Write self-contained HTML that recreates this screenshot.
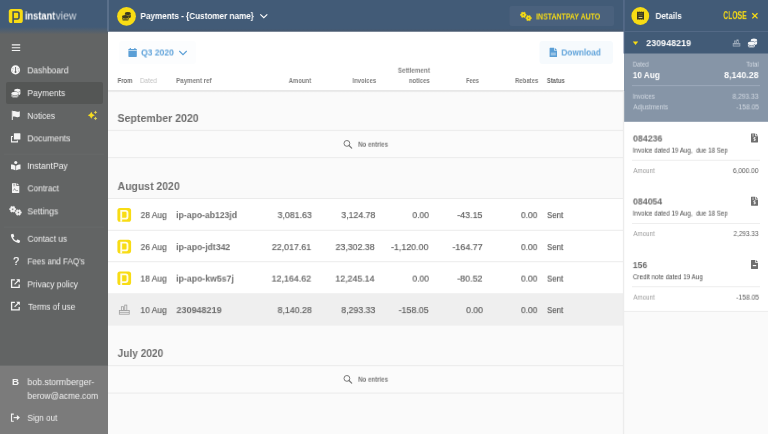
<!DOCTYPE html>
<html><head><meta charset="utf-8"><title>instantview - Payments</title>
<style>
html,body{margin:0;padding:0}
body{width:768px;height:434px;overflow:hidden;background:#fafafa;position:relative;font-family:"Liberation Sans",sans-serif;}
.t{position:absolute;white-space:pre;display:block}
svg{position:absolute;left:0;top:0}
</style></head><body>
<svg width="768" height="434" viewBox="0 0 768 434">
<defs>
<linearGradient id="hs" x1="0" y1="0" x2="0" y2="1"><stop offset="0" stop-color="#000" stop-opacity=".13"/><stop offset="1" stop-color="#000" stop-opacity="0"/></linearGradient>
<linearGradient id="sh" x1="0" y1="0" x2="0" y2="1"><stop offset="0" stop-color="#425b77"/><stop offset="1" stop-color="#626464"/></linearGradient>
<linearGradient id="hb" x1="0" y1="0" x2="0" y2="1"><stop offset="0" stop-color="#48566a" stop-opacity="0"/><stop offset="1" stop-color="#48566a" stop-opacity=".85"/></linearGradient>
</defs>
<rect x="0" y="0" width="768" height="434" fill="#fafafa"/>
<!-- main table header -->
<rect x="108" y="90.1" width="516" height="2.6" fill="url(#hs)"/>
<rect x="108" y="31" width="516" height="59.2" fill="#fff"/>
<rect x="119" y="41" width="77" height="23" rx="3" fill="#fcfdfe"/>
<rect x="539.5" y="41" width="73.5" height="23" rx="3" fill="#f6fafd"/>
<!-- no entries rows -->
<rect x="108" y="129.9" width="516" height="28.3" fill="#ededed"/>
<rect x="108" y="131.1" width="516" height="25.9" fill="#fbfbfb"/>
<rect x="108" y="365" width="516" height="28.7" fill="#ededed"/>
<rect x="108" y="366.2" width="516" height="26.3" fill="#fbfbfb"/>
<!-- data rows -->
<rect x="108" y="198" width="516" height="95.3" fill="#e9e9e9"/>
<rect x="108" y="198.9" width="516" height="30.9" fill="#fff"/>
<rect x="108" y="230.7" width="516" height="30.6" fill="#fff"/>
<rect x="108" y="262.2" width="516" height="31.1" fill="#fff"/>
<rect x="108" y="293.3" width="516" height="32.3" fill="#efefef"/>
<!-- top bar -->
<rect x="108" y="0" width="660" height="31.5" fill="#425b77"/>
<rect x="108" y="28.5" width="516" height="3" fill="url(#hb)"/>
<rect x="509.5" y="6" width="104.5" height="20" rx="2" fill="#4a617d"/>
<!-- sidebar -->
<rect x="0" y="0" width="108" height="434" fill="#626464"/>
<rect x="0" y="0" width="108" height="27.3" fill="#425b77"/>
<rect x="0" y="27" width="108" height="7.5" fill="url(#sh)"/>
<rect x="0" y="365.6" width="108" height="68.4" fill="#7b7b7b"/>
<rect x="6" y="82" width="97" height="22" rx="2" fill="#545655"/>
<rect x="4" y="153.7" width="100" height="0.9" fill="#686a6a"/>
<rect x="4" y="226.6" width="100" height="0.9" fill="#686a6a"/>
<rect x="107.4" y="0" width="1.2" height="31.3" fill="#6b7f99"/>
<!-- right panel -->
<rect x="624" y="121" width="144" height="190.8" fill="#ececec"/>
<rect x="624" y="121" width="144" height="189.9" fill="#fff"/>
<rect x="624" y="31" width="144" height="23" fill="#425b77"/>
<rect x="624" y="53.5" width="144" height="68.3" fill="#8695a7"/>
<rect x="623.4" y="0" width="1.1" height="53.5" fill="#66799a" opacity=".8"/>
<rect x="624.2" y="31" width="143.8" height="0.9" fill="#566b88"/>
<rect x="632" y="85.2" width="128" height="0.9" fill="#9eabbc"/>
<rect x="622.9" y="91" width="1.3" height="343" fill="#ececec"/>
<rect x="632" y="159.8" width="128" height="0.9" fill="#ececec"/>
<rect x="632" y="223" width="128" height="0.9" fill="#ececec"/>
<rect x="632" y="286.3" width="128" height="0.9" fill="#ececec"/>
</svg>
<div id="tx" style="position:absolute;left:0;top:0;width:768px;height:434px;will-change:transform">
<span class="t" style="top:63px;font-size:9.4px;line-height:13px;color:#f2f2f2;left:27px;transform-origin:0 50%;transform:matrix3d(0.8958,0,0,0,0,1,0,0,0,0,1,0,0.360,0.365,0,1);">Dashboard</span>
<span class="t" style="top:86px;font-size:9.4px;line-height:13px;color:#f2f2f2;left:27px;transform-origin:0 50%;transform:matrix3d(0.9060,0,0,0,0,1,0,0,0,0,1,0,0.360,0.065,0,1);">Payments</span>
<span class="t" style="top:108px;font-size:9.4px;line-height:13px;color:#f2f2f2;left:27px;transform-origin:0 50%;transform:matrix3d(0.8842,0,0,0,0,1,0,0,0,0,1,0,0.370,0.865,0,1);">Notices</span>
<span class="t" style="top:131px;font-size:9.4px;line-height:13px;color:#f2f2f2;left:27px;transform-origin:0 50%;transform:matrix3d(0.9047,0,0,0,0,1,0,0,0,0,1,0,0.360,0.365,0,1);">Documents</span>
<span class="t" style="top:158px;font-size:9.4px;line-height:13px;color:#f2f2f2;left:27px;transform-origin:0 50%;transform:matrix3d(0.9112,0,0,0,0,1,0,0,0,0,1,0,0.300,0.865,0,1);">InstantPay</span>
<span class="t" style="top:181px;font-size:9.4px;line-height:13px;color:#f2f2f2;left:27px;transform-origin:0 50%;transform:matrix3d(0.8849,0,0,0,0,1,0,0,0,0,1,0,0.530,0.365,0,1);">Contract</span>
<span class="t" style="top:204px;font-size:9.4px;line-height:13px;color:#f2f2f2;left:27px;transform-origin:0 50%;transform:matrix3d(0.9081,0,0,0,0,1,0,0,0,0,1,0,0.380,0.365,0,1);">Settings</span>
<span class="t" style="top:231px;font-size:9.4px;line-height:13px;color:#f2f2f2;left:27px;transform-origin:0 50%;transform:matrix3d(0.8801,0,0,0,0,1,0,0,0,0,1,0,0.540,0.765,0,1);">Contact us</span>
<span class="t" style="top:254px;font-size:9.4px;line-height:13px;color:#f2f2f2;left:27px;transform-origin:0 50%;transform:matrix3d(0.8542,0,0,0,0,1,0,0,0,0,1,0,0.400,0.365,0,1);">Fees and FAQ’s</span>
<span class="t" style="top:277px;font-size:9.4px;line-height:13px;color:#f2f2f2;left:27px;transform-origin:0 50%;transform:matrix3d(0.8828,0,0,0,0,1,0,0,0,0,1,0,0.370,0.265,0,1);">Privacy policy</span>
<span class="t" style="top:299px;font-size:9.4px;line-height:13px;color:#f2f2f2;left:28px;transform-origin:0 50%;transform:matrix3d(0.8781,0,0,0,0,1,0,0,0,0,1,0,0.080,0.765,0,1);">Terms of use</span>
<span class="t" style="top:375px;font-size:9.4px;line-height:13px;color:#f2f2f2;left:27px;transform-origin:0 50%;transform:matrix3d(0.9291,0,0,0,0,1,0,0,0,0,1,0,0.440,0.065,0,1);">bob.stormberger-</span>
<span class="t" style="top:388px;font-size:9.4px;line-height:13px;color:#f2f2f2;left:27px;transform-origin:0 50%;transform:matrix3d(0.9020,0,0,0,0,1,0,0,0,0,1,0,0.460,0.865,0,1);">berow@acme.com</span>
<span class="t" style="top:410px;font-size:9.4px;line-height:13px;color:#f2f2f2;left:27px;transform-origin:0 50%;transform:matrix3d(0.8737,0,0,0,0,1,0,0,0,0,1,0,0.400,0.865,0,1);">Sign out</span>
<span class="t" style="top:8px;font-size:11px;line-height:15px;color:#ffffff;font-weight:bold;left:24px;transform-origin:0 50%;transform:matrix3d(0.8394,0,0,0,0,1,0,0,0,0,1,0,0.910,0.438,0,1);">instant</span>
<span class="t" style="top:8px;font-size:11px;line-height:15px;color:#d5dbe3;left:55px;transform-origin:0 50%;transform:matrix3d(0.9439,0,0,0,0,1,0,0,0,0,1,0,0.590,0.438,0,1);">view</span>
<span class="t" style="top:253px;font-size:10.5px;line-height:15px;color:#f2f2f2;-webkit-text-stroke:0.2px #f2f2f2;left:13px;transform-origin:0 50%;transform:matrix3d(1.0000,0,0,0,0,1,0,0,0,0,1,0,0.200,0.759,0,1);">?</span>
<span class="t" style="top:375px;font-size:9.8px;line-height:14px;color:#f2f2f2;font-weight:bold;left:12px;transform-origin:0 50%;transform:matrix3d(1.0000,0,0,0,0,1,0,0,0,0,1,0,0.090,0.208,0,1);">B</span>
<span class="t" style="top:8px;font-size:9.6px;line-height:13px;color:#ffffff;font-weight:bold;left:140px;transform-origin:0 50%;transform:matrix3d(0.8473,0,0,0,0,1,0,0,0,0,1,0,0.490,0.987,0,1);">Payments - {Customer name}</span>
<span class="t" style="top:10px;font-size:9.2px;line-height:13px;color:#f8dc14;font-weight:bold;left:536px;transform-origin:0 50%;transform:matrix3d(0.7604,0,0,0,0,1,0,0,0,0,1,0,0.070,0.494,0,1);">INSTANTPAY AUTO</span>
<span class="t" style="top:8px;font-size:9.6px;line-height:13px;color:#ffffff;font-weight:bold;left:655px;transform-origin:0 50%;transform:matrix3d(0.8302,0,0,0,0,1,0,0,0,0,1,0,0.600,0.937,0,1);">Details</span>
<span class="t" style="top:9px;font-size:10px;line-height:14px;color:#f8dc14;font-weight:bold;left:723px;transform-origin:0 50%;transform:matrix3d(0.6824,0,0,0,0,1,0,0,0,0,1,0,0.220,0.080,0,1);">CLOSE</span>
<span class="t" style="top:45px;font-size:9.4px;line-height:13px;color:#60a3da;font-weight:bold;left:141px;transform-origin:0 50%;transform:matrix3d(0.9111,0,0,0,0,1,0,0,0,0,1,0,0.110,0.465,0,1);">Q3 2020</span>
<span class="t" style="top:45px;font-size:9.4px;line-height:13px;color:#60a3da;font-weight:bold;left:561px;transform-origin:0 50%;transform:matrix3d(0.8837,0,0,0,0,1,0,0,0,0,1,0,0.370,0.465,0,1);">Download</span>
<span class="t" style="top:75px;font-size:7.1px;line-height:10px;color:#6a6a6a;font-weight:bold;left:117px;transform-origin:0 50%;transform:matrix3d(0.8262,0,0,0,0,1,0,0,0,0,1,0,0.640,0.992,0,1);">From</span>
<span class="t" style="top:75px;font-size:7.1px;line-height:10px;color:#c2c2c2;left:139px;transform-origin:0 50%;transform:matrix3d(0.8969,0,0,0,0,1,0,0,0,0,1,0,0.980,0.992,0,1);">Dated</span>
<span class="t" style="top:75px;font-size:7.1px;line-height:10px;color:#808080;font-weight:bold;left:176px;transform-origin:0 50%;transform:matrix3d(0.8743,0,0,0,0,1,0,0,0,0,1,0,0.110,0.992,0,1);">Payment ref</span>
<span class="t" style="top:75px;font-size:7.1px;line-height:10px;color:#808080;font-weight:bold;right:456px;transform-origin:100% 50%;transform:matrix3d(0.8352,0,0,0,0,1,0,0,0,0,1,0,-0.670,0.992,0,1);">Amount</span>
<span class="t" style="top:75px;font-size:7.1px;line-height:10px;color:#808080;font-weight:bold;right:392px;transform-origin:100% 50%;transform:matrix3d(0.8303,0,0,0,0,1,0,0,0,0,1,0,-0.300,0.992,0,1);">Invoices</span>
<span class="t" style="top:65px;font-size:7.1px;line-height:10px;color:#808080;font-weight:bold;right:338px;transform-origin:100% 50%;transform:matrix3d(0.8812,0,0,0,0,1,0,0,0,0,1,0,-0.460,0.742,0,1);">Settlement</span>
<span class="t" style="top:75px;font-size:7.1px;line-height:10px;color:#808080;font-weight:bold;right:338px;transform-origin:100% 50%;transform:matrix3d(0.8316,0,0,0,0,1,0,0,0,0,1,0,-0.230,0.992,0,1);">notices</span>
<span class="t" style="top:75px;font-size:7.1px;line-height:10px;color:#808080;font-weight:bold;right:289px;transform-origin:100% 50%;transform:matrix3d(0.7864,0,0,0,0,1,0,0,0,0,1,0,-0.370,0.992,0,1);">Fees</span>
<span class="t" style="top:75px;font-size:7.1px;line-height:10px;color:#808080;font-weight:bold;left:515px;transform-origin:0 50%;transform:matrix3d(0.8369,0,0,0,0,1,0,0,0,0,1,0,0.130,0.992,0,1);">Rebates</span>
<span class="t" style="top:75px;font-size:7.1px;line-height:10px;color:#6a6a6a;font-weight:bold;left:546px;transform-origin:0 50%;transform:matrix3d(0.8273,0,0,0,0,1,0,0,0,0,1,0,0.860,0.992,0,1);">Status</span>
<span class="t" style="top:109px;font-size:11.3px;line-height:16px;color:#707070;font-weight:bold;left:117px;transform-origin:0 50%;transform:matrix3d(0.9374,0,0,0,0,1,0,0,0,0,1,0,0.520,0.995,0,1);">September 2020</span>
<span class="t" style="top:177px;font-size:11.3px;line-height:16px;color:#707070;font-weight:bold;left:117px;transform-origin:0 50%;transform:matrix3d(0.9239,0,0,0,0,1,0,0,0,0,1,0,0.590,0.995,0,1);">August 2020</span>
<span class="t" style="top:344px;font-size:11.3px;line-height:16px;color:#707070;font-weight:bold;left:117px;transform-origin:0 50%;transform:matrix3d(0.8968,0,0,0,0,1,0,0,0,0,1,0,0.630,0.995,0,1);">July 2020</span>
<span class="t" style="top:139px;font-size:7.1px;line-height:10px;color:#777;font-weight:bold;left:358px;transform-origin:0 50%;transform:matrix3d(0.8632,0,0,0,0,1,0,0,0,0,1,0,0.120,0.742,0,1);">No entries</span>
<span class="t" style="top:374px;font-size:7.1px;line-height:10px;color:#777;font-weight:bold;left:358px;transform-origin:0 50%;transform:matrix3d(0.8632,0,0,0,0,1,0,0,0,0,1,0,0.120,0.742,0,1);">No entries</span>
<span class="t" style="top:208px;font-size:9.4px;line-height:13px;color:#5e5e5e;-webkit-text-stroke:0.18px #5e5e5e;left:140px;transform-origin:0 50%;transform:matrix3d(0.8931,0,0,0,0,1,0,0,0,0,1,0,0.620,0.065,0,1);">28 Aug</span>
<span class="t" style="top:208px;font-size:9.4px;line-height:13px;color:#6e6e6e;font-weight:bold;left:176px;transform-origin:0 50%;transform:matrix3d(0.9193,0,0,0,0,1,0,0,0,0,1,0,0.190,0.065,0,1);">ip-apo-ab123jd</span>
<span class="t" style="top:208px;font-size:9.4px;line-height:13px;color:#5e5e5e;-webkit-text-stroke:0.18px #5e5e5e;right:456px;transform-origin:100% 50%;transform:matrix3d(0.9379,0,0,0,0,1,0,0,0,0,1,0,-0.670,0.065,0,1);">3,081.63</span>
<span class="t" style="top:208px;font-size:9.4px;line-height:13px;color:#5e5e5e;-webkit-text-stroke:0.18px #5e5e5e;right:393px;transform-origin:100% 50%;transform:matrix3d(0.9307,0,0,0,0,1,0,0,0,0,1,0,-0.180,0.065,0,1);">3,124.78</span>
<span class="t" style="top:208px;font-size:9.4px;line-height:13px;color:#5e5e5e;-webkit-text-stroke:0.18px #5e5e5e;right:339px;transform-origin:100% 50%;transform:matrix3d(0.9037,0,0,0,0,1,0,0,0,0,1,0,-0.330,0.065,0,1);">0.00</span>
<span class="t" style="top:208px;font-size:9.4px;line-height:13px;color:#5e5e5e;-webkit-text-stroke:0.18px #5e5e5e;right:285px;transform-origin:100% 50%;transform:matrix3d(0.9485,0,0,0,0,1,0,0,0,0,1,0,-0.110,0.065,0,1);">-43.15</span>
<span class="t" style="top:208px;font-size:9.4px;line-height:13px;color:#5e5e5e;-webkit-text-stroke:0.18px #5e5e5e;right:230px;transform-origin:100% 50%;transform:matrix3d(0.9037,0,0,0,0,1,0,0,0,0,1,0,-0.830,0.065,0,1);">0.00</span>
<span class="t" style="top:208px;font-size:9.4px;line-height:13px;color:#5e5e5e;-webkit-text-stroke:0.18px #5e5e5e;left:546px;transform-origin:0 50%;transform:matrix3d(0.8407,0,0,0,0,1,0,0,0,0,1,0,0.990,0.065,0,1);">Sent</span>
<span class="t" style="top:240px;font-size:9.4px;line-height:13px;color:#5e5e5e;-webkit-text-stroke:0.18px #5e5e5e;left:140px;transform-origin:0 50%;transform:matrix3d(0.8931,0,0,0,0,1,0,0,0,0,1,0,0.620,0.065,0,1);">26 Aug</span>
<span class="t" style="top:240px;font-size:9.4px;line-height:13px;color:#6e6e6e;font-weight:bold;left:176px;transform-origin:0 50%;transform:matrix3d(0.9271,0,0,0,0,1,0,0,0,0,1,0,0.190,0.065,0,1);">ip-apo-jdt342</span>
<span class="t" style="top:240px;font-size:9.4px;line-height:13px;color:#5e5e5e;-webkit-text-stroke:0.18px #5e5e5e;right:456px;transform-origin:100% 50%;transform:matrix3d(0.9412,0,0,0,0,1,0,0,0,0,1,0,-0.640,0.065,0,1);">22,017.61</span>
<span class="t" style="top:240px;font-size:9.4px;line-height:13px;color:#5e5e5e;-webkit-text-stroke:0.18px #5e5e5e;right:393px;transform-origin:100% 50%;transform:matrix3d(0.9348,0,0,0,0,1,0,0,0,0,1,0,-0.150,0.065,0,1);">23,302.38</span>
<span class="t" style="top:240px;font-size:9.4px;line-height:13px;color:#5e5e5e;-webkit-text-stroke:0.18px #5e5e5e;right:339px;transform-origin:100% 50%;transform:matrix3d(0.9409,0,0,0,0,1,0,0,0,0,1,0,-0.300,0.065,0,1);">-1,120.00</span>
<span class="t" style="top:240px;font-size:9.4px;line-height:13px;color:#5e5e5e;-webkit-text-stroke:0.18px #5e5e5e;right:285px;transform-origin:100% 50%;transform:matrix3d(0.9508,0,0,0,0,1,0,0,0,0,1,0,-0.110,0.065,0,1);">-164.77</span>
<span class="t" style="top:240px;font-size:9.4px;line-height:13px;color:#5e5e5e;-webkit-text-stroke:0.18px #5e5e5e;right:230px;transform-origin:100% 50%;transform:matrix3d(0.9037,0,0,0,0,1,0,0,0,0,1,0,-0.830,0.065,0,1);">0.00</span>
<span class="t" style="top:240px;font-size:9.4px;line-height:13px;color:#5e5e5e;-webkit-text-stroke:0.18px #5e5e5e;left:546px;transform-origin:0 50%;transform:matrix3d(0.8407,0,0,0,0,1,0,0,0,0,1,0,0.990,0.065,0,1);">Sent</span>
<span class="t" style="top:271px;font-size:9.4px;line-height:13px;color:#5e5e5e;-webkit-text-stroke:0.18px #5e5e5e;left:140px;transform-origin:0 50%;transform:matrix3d(0.8998,0,0,0,0,1,0,0,0,0,1,0,0.430,0.565,0,1);">18 Aug</span>
<span class="t" style="top:271px;font-size:9.4px;line-height:13px;color:#6e6e6e;font-weight:bold;left:176px;transform-origin:0 50%;transform:matrix3d(0.9282,0,0,0,0,1,0,0,0,0,1,0,0.180,0.565,0,1);">ip-apo-kw5s7j</span>
<span class="t" style="top:271px;font-size:9.4px;line-height:13px;color:#5e5e5e;-webkit-text-stroke:0.18px #5e5e5e;right:456px;transform-origin:100% 50%;transform:matrix3d(0.9461,0,0,0,0,1,0,0,0,0,1,0,-0.640,0.565,0,1);">12,164.62</span>
<span class="t" style="top:271px;font-size:9.4px;line-height:13px;color:#5e5e5e;-webkit-text-stroke:0.18px #5e5e5e;right:393px;transform-origin:100% 50%;transform:matrix3d(0.9369,0,0,0,0,1,0,0,0,0,1,0,-0.270,0.565,0,1);">12,245.14</span>
<span class="t" style="top:271px;font-size:9.4px;line-height:13px;color:#5e5e5e;-webkit-text-stroke:0.18px #5e5e5e;right:339px;transform-origin:100% 50%;transform:matrix3d(0.9037,0,0,0,0,1,0,0,0,0,1,0,-0.330,0.565,0,1);">0.00</span>
<span class="t" style="top:271px;font-size:9.4px;line-height:13px;color:#5e5e5e;-webkit-text-stroke:0.18px #5e5e5e;right:285px;transform-origin:100% 50%;transform:matrix3d(0.9496,0,0,0,0,1,0,0,0,0,1,0,-0.080,0.565,0,1);">-80.52</span>
<span class="t" style="top:271px;font-size:9.4px;line-height:13px;color:#5e5e5e;-webkit-text-stroke:0.18px #5e5e5e;right:230px;transform-origin:100% 50%;transform:matrix3d(0.9037,0,0,0,0,1,0,0,0,0,1,0,-0.830,0.565,0,1);">0.00</span>
<span class="t" style="top:271px;font-size:9.4px;line-height:13px;color:#5e5e5e;-webkit-text-stroke:0.18px #5e5e5e;left:546px;transform-origin:0 50%;transform:matrix3d(0.8407,0,0,0,0,1,0,0,0,0,1,0,0.990,0.565,0,1);">Sent</span>
<span class="t" style="top:303px;font-size:9.4px;line-height:13px;color:#5e5e5e;-webkit-text-stroke:0.18px #5e5e5e;left:140px;transform-origin:0 50%;transform:matrix3d(0.8998,0,0,0,0,1,0,0,0,0,1,0,0.430,0.065,0,1);">10 Aug</span>
<span class="t" style="top:303px;font-size:9.4px;line-height:13px;color:#6e6e6e;font-weight:bold;left:176px;transform-origin:0 50%;transform:matrix3d(0.9626,0,0,0,0,1,0,0,0,0,1,0,0.430,0.065,0,1);">230948219</span>
<span class="t" style="top:303px;font-size:9.4px;line-height:13px;color:#5e5e5e;-webkit-text-stroke:0.18px #5e5e5e;right:456px;transform-origin:100% 50%;transform:matrix3d(0.9377,0,0,0,0,1,0,0,0,0,1,0,-0.680,0.065,0,1);">8,140.28</span>
<span class="t" style="top:303px;font-size:9.4px;line-height:13px;color:#5e5e5e;-webkit-text-stroke:0.18px #5e5e5e;right:393px;transform-origin:100% 50%;transform:matrix3d(0.9309,0,0,0,0,1,0,0,0,0,1,0,-0.170,0.065,0,1);">8,293.33</span>
<span class="t" style="top:303px;font-size:9.4px;line-height:13px;color:#5e5e5e;-webkit-text-stroke:0.18px #5e5e5e;right:339px;transform-origin:100% 50%;transform:matrix3d(0.9448,0,0,0,0,1,0,0,0,0,1,0,-0.090,0.065,0,1);">-158.05</span>
<span class="t" style="top:303px;font-size:9.4px;line-height:13px;color:#5e5e5e;-webkit-text-stroke:0.18px #5e5e5e;right:285px;transform-origin:100% 50%;transform:matrix3d(0.9206,0,0,0,0,1,0,0,0,0,1,0,-0.330,0.065,0,1);">0.00</span>
<span class="t" style="top:303px;font-size:9.4px;line-height:13px;color:#5e5e5e;-webkit-text-stroke:0.18px #5e5e5e;right:230px;transform-origin:100% 50%;transform:matrix3d(0.9037,0,0,0,0,1,0,0,0,0,1,0,-0.830,0.065,0,1);">0.00</span>
<span class="t" style="top:303px;font-size:9.4px;line-height:13px;color:#5e5e5e;-webkit-text-stroke:0.18px #5e5e5e;left:546px;transform-origin:0 50%;transform:matrix3d(0.8407,0,0,0,0,1,0,0,0,0,1,0,0.990,0.065,0,1);">Sent</span>
<span class="t" style="top:36px;font-size:9.5px;line-height:13px;color:#ffffff;font-weight:bold;left:646px;transform-origin:0 50%;transform:matrix3d(0.9430,0,0,0,0,1,0,0,0,0,1,0,0.190,0.101,0,1);">230948219</span>
<span class="t" style="top:59px;font-size:7.1px;line-height:10px;color:#d3dae3;left:632px;transform-origin:0 50%;transform:matrix3d(0.8352,0,0,0,0,1,0,0,0,0,1,0,0.820,0.642,0,1);">Dated</span>
<span class="t" style="top:59px;font-size:7.1px;line-height:10px;color:#d3dae3;right:9px;transform-origin:100% 50%;transform:matrix3d(0.8170,0,0,0,0,1,0,0,0,0,1,0,-0.490,0.642,0,1);">Total</span>
<span class="t" style="top:68px;font-size:9.5px;line-height:13px;color:#ffffff;font-weight:bold;left:632px;transform-origin:0 50%;transform:matrix3d(0.8618,0,0,0,0,1,0,0,0,0,1,0,0.810,0.101,0,1);">10 Aug</span>
<span class="t" style="top:68px;font-size:9.5px;line-height:13px;color:#ffffff;font-weight:bold;right:9px;transform-origin:100% 50%;transform:matrix3d(0.9296,0,0,0,0,1,0,0,0,0,1,0,-0.490,0.101,0,1);">8,140.28</span>
<span class="t" style="top:91px;font-size:7.1px;line-height:10px;color:#d3dae3;left:632px;transform-origin:0 50%;transform:matrix3d(0.8447,0,0,0,0,1,0,0,0,0,1,0,0.760,0.742,0,1);">Invoices</span>
<span class="t" style="top:91px;font-size:7.1px;line-height:10px;color:#d3dae3;right:9px;transform-origin:100% 50%;transform:matrix3d(0.9387,0,0,0,0,1,0,0,0,0,1,0,-0.220,0.742,0,1);">8,293.33</span>
<span class="t" style="top:102px;font-size:7.1px;line-height:10px;color:#d3dae3;left:633px;transform-origin:0 50%;transform:matrix3d(0.8882,0,0,0,0,1,0,0,0,0,1,0,0.380,0.342,0,1);">Adjustments</span>
<span class="t" style="top:102px;font-size:7.1px;line-height:10px;color:#d3dae3;right:8px;transform-origin:100% 50%;transform:matrix3d(0.9525,0,0,0,0,1,0,0,0,0,1,0,-0.950,0.342,0,1);">-158.05</span>
<span class="t" style="top:131px;font-size:9.4px;line-height:13px;color:#6c6c6c;font-weight:bold;left:632px;transform-origin:0 50%;transform:matrix3d(0.9437,0,0,0,0,1,0,0,0,0,1,0,0.920,0.465,0,1);">084236</span>
<span class="t" style="top:145px;font-size:7.1px;line-height:10px;color:#4a4a4a;left:632px;transform-origin:0 50%;transform:matrix3d(0.8762,0,0,0,0,1,0,0,0,0,1,0,0.740,0.642,0,1);">Invoice dated 19 Aug,  due 18 Sep</span>
<span class="t" style="top:166px;font-size:7.1px;line-height:10px;color:#9a9a9a;left:633px;transform-origin:0 50%;transform:matrix3d(0.8714,0,0,0,0,1,0,0,0,0,1,0,0.380,0.042,0,1);">Amount</span>
<span class="t" style="top:166px;font-size:7.1px;line-height:10px;color:#5a5a5a;right:9px;transform-origin:100% 50%;transform:matrix3d(0.9221,0,0,0,0,1,0,0,0,0,1,0,-0.250,0.042,0,1);">6,000.00</span>
<span class="t" style="top:194px;font-size:9.4px;line-height:13px;color:#6c6c6c;font-weight:bold;left:632px;transform-origin:0 50%;transform:matrix3d(0.9371,0,0,0,0,1,0,0,0,0,1,0,0.930,0.465,0,1);">084054</span>
<span class="t" style="top:208px;font-size:7.1px;line-height:10px;color:#4a4a4a;left:632px;transform-origin:0 50%;transform:matrix3d(0.8762,0,0,0,0,1,0,0,0,0,1,0,0.740,0.642,0,1);">Invoice dated 19 Aug,  due 18 Sep</span>
<span class="t" style="top:229px;font-size:7.1px;line-height:10px;color:#9a9a9a;left:633px;transform-origin:0 50%;transform:matrix3d(0.8714,0,0,0,0,1,0,0,0,0,1,0,0.380,0.042,0,1);">Amount</span>
<span class="t" style="top:229px;font-size:7.1px;line-height:10px;color:#5a5a5a;right:9px;transform-origin:100% 50%;transform:matrix3d(0.8993,0,0,0,0,1,0,0,0,0,1,0,-0.230,0.042,0,1);">2,293.33</span>
<span class="t" style="top:258px;font-size:9.4px;line-height:13px;color:#6c6c6c;font-weight:bold;left:632px;transform-origin:0 50%;transform:matrix3d(0.9131,0,0,0,0,1,0,0,0,0,1,0,0.780,0.065,0,1);">156</span>
<span class="t" style="top:272px;font-size:7.1px;line-height:10px;color:#4a4a4a;left:632px;transform-origin:0 50%;transform:matrix3d(0.8916,0,0,0,0,1,0,0,0,0,1,0,0.870,0.242,0,1);">Credit note dated 19 Aug</span>
<span class="t" style="top:292px;font-size:7.1px;line-height:10px;color:#9a9a9a;left:633px;transform-origin:0 50%;transform:matrix3d(0.8714,0,0,0,0,1,0,0,0,0,1,0,0.380,0.642,0,1);">Amount</span>
<span class="t" style="top:292px;font-size:7.1px;line-height:10px;color:#5a5a5a;right:8px;transform-origin:100% 50%;transform:matrix3d(0.9525,0,0,0,0,1,0,0,0,0,1,0,-0.950,0.642,0,1);">-158.05</span>
</div>
<svg width="768" height="434" viewBox="0 0 768 434">
<g transform="translate(8.8 9) scale(1.0)"><rect x="0" y="0" width="14" height="14" rx="2.6" fill="#f8dc14"/><path d="M4.3 14 V2.95 H8.7 a1.5 1.5 0 0 1 1.5 1.5 V8.5 a1.5 1.5 0 0 1 -1.5 1.5 H4.6" fill="none" stroke="#3d4f63" stroke-width="1.55"/></g>
<path d="M11.8 44.9 H20.2 M11.8 47.7 H20.2 M11.8 50.5 H20.2" stroke="#f4f4f4" stroke-width="1.1"/>
<circle cx="15.55" cy="69.9" r="4.55" fill="#f4f4f4"/>
<path d="M15.55 67 V72" stroke="#626464" stroke-width="0.9"/><circle cx="15.55" cy="72" r="0.95" fill="#626464"/><path d="M12.9 68.2 L13.2 69.3 M18.2 68.2 L17.9 69.3 M12.4 70.6 V71.5 M18.7 70.6 V71.5" stroke="#8a8c8c" stroke-width="0.7"/>
<g transform="translate(11.4 88.5) scale(1.011111111111111)"><path d="M2.9 1.7 a3 1.5 0 0 1 6 0 v3.4 a3 1.5 0 0 1 -2 1.4 v-2 a3.4 1.6 0 0 0 -4 -1.7z" fill="#f4f4f4"/><path d="M0.1 4.7 a3.4 1.55 0 0 1 6.8 0 v2.7 a3.4 1.55 0 0 1 -6.8 0z" fill="#f4f4f4"/><path d="M0.1 5.55 a3.4 1.55 0 0 0 6.8 0 M0.1 7.0 a3.4 1.55 0 0 0 6.8 0" fill="none" stroke="#545655" stroke-width="0.55"/><path d="M7.1 3.4 a3 1.5 0 0 0 1.8 -0.9" fill="none" stroke="#545655" stroke-width="0.5"/></g>
<path d="M11.8 110.8 h1 v9.1 h-1z" fill="#f4f4f4"/><path d="M12.8 111.3 c1.6 -0.7 2.6 0 3.6 0.3 s2 0.3 3.4 -0.4 v5.4 c-1.4 0.7 -2.4 0.7 -3.4 0.4 s-2 -1 -3.6 -0.3z" fill="#f4f4f4"/>
<path d="M91.3 111.8 Q92.07 114.53 94.8 115.3 Q92.07 116.07 91.3 118.8 Q90.53 116.07 87.8 115.3 Q90.53 114.53 91.3 111.8Z" fill="#f5dc1e" opacity="1"/>
<path d="M95.5 110.5 Q95.896 111.904 97.3 112.3 Q95.896 112.696 95.5 114.1 Q95.104 112.696 93.7 112.3 Q95.104 111.904 95.5 110.5Z" fill="#f0dc4a" opacity="0.95"/>
<path d="M95.5 116.60000000000001 Q95.896 118.004 97.3 118.4 Q95.896 118.796 95.5 120.2 Q95.104 118.796 93.7 118.4 Q95.104 118.004 95.5 116.60000000000001Z" fill="#e3d85a" opacity="0.95"/>
<path d="M13 136.5 H11.5 V141.9 H17.4 V140.5" fill="none" stroke="#f4f4f4" stroke-width="1.1"/><rect x="13.9" y="133.2" width="6.5" height="6.4" rx="0.5" fill="#f4f4f4"/>
<circle cx="15.75" cy="162.5" r="1.55" fill="#f4f4f4"/><path d="M11 164.6 c1.6 0 3.2 0.4 4.4 1.1 v4.6 c-1.2 -0.7 -2.8 -1.1 -4.4 -1.1z M20.5 164.6 c-1.6 0 -3.2 0.4 -4.4 1.1 v4.6 c1.2 -0.7 2.8 -1.1 4.4 -1.1z" fill="#f4f4f4"/>
<path d="M12.4 183.2 H16.4 V186 H19.3 V192.5 a0.4 0.4 0 0 1 -0.4 0.4 H12.4 a0.4 0.4 0 0 1 -0.4 -0.4 V183.6 a0.4 0.4 0 0 1 0.4 -0.4z M17.1 183.2 L19.3 185.3 H17.1z" fill="#f4f4f4"/><path d="M13.2 184.6 H15.2 M13.2 185.8 H15.2" stroke="#626464" stroke-width="0.5"/><path d="M13.3 190.6 L14.6 188.6 L15.4 190.2 L16.2 190.6 H18" fill="none" stroke="#626464" stroke-width="0.6"/>
<path d="M15.72 208.49 L15.72 209.91 L15.06 209.97 L14.54 210.86 L14.82 211.46 L13.60 212.17 L13.22 211.63 L12.18 211.63 L11.80 212.17 L10.58 211.46 L10.86 210.86 L10.34 209.97 L9.68 209.91 L9.68 208.49 L10.34 208.43 L10.86 207.54 L10.58 206.94 L11.80 206.23 L12.18 206.77 L13.22 206.77 L13.60 206.23 L14.82 206.94 L14.54 207.54 L15.06 208.43Z M13.63 209.20 A0.93 0.93 0 1 0 11.77 209.20 A0.93 0.93 0 1 0 13.63 209.20Z" fill="#f4f4f4" fill-rule="evenodd" stroke="#f4f4f4" stroke-width="0.5" stroke-linejoin="round"/>
<path d="M21.32 211.81 L21.32 213.19 L20.68 213.24 L20.18 214.11 L20.45 214.69 L19.27 215.37 L18.90 214.85 L17.90 214.85 L17.53 215.37 L16.35 214.69 L16.62 214.11 L16.12 213.24 L15.48 213.19 L15.48 211.81 L16.12 211.76 L16.62 210.89 L16.35 210.31 L17.53 209.63 L17.90 210.15 L18.90 210.15 L19.27 209.63 L20.45 210.31 L20.18 210.89 L20.68 211.76Z M19.30 212.50 A0.90 0.90 0 1 0 17.50 212.50 A0.90 0.90 0 1 0 19.30 212.50Z" fill="#f4f4f4" fill-rule="evenodd" stroke="#f4f4f4" stroke-width="0.5" stroke-linejoin="round"/>
<path d="M12.6 233.9 l-1.3 0.4 c-0.4 0.2 -0.5 0.5 -0.4 1 c0.6 4 3.7 7.100 7.700 7.700 c0.5 0.1 0.8 -0.1 1 -0.4 l0.500 -1.4 c0.1 -0.3 0 -0.6 -0.3 -0.8 l-1.9 -0.8 c-0.3 -0.1 -0.6 0 -0.8 0.2 l-0.8 1 c-1.5 -0.7 -2.6 -1.8 -3.300 -3.300 l1 -0.8 c0.2 -0.2 0.3 -0.5 0.2 -0.8 l-0.8 -1.800 c-0.2 -0.300 -0.500 -0.400 -0.800 -0.200z" fill="#f4f4f4"/>
<g transform="translate(11 279.2)" fill="none" stroke="#f4f4f4" stroke-width="1.3"><path d="M3.9 0.6 H0.6 V8.2 H8.2 V5.2"/><path d="M3.6 5.2 L8.3 0.5" stroke-width="1.2"/><path d="M5.2 0 H8.8 V3.6Z" fill="#f4f4f4" stroke="none"/></g>
<g transform="translate(11 301.7)" fill="none" stroke="#f4f4f4" stroke-width="1.3"><path d="M3.9 0.6 H0.6 V8.2 H8.2 V5.2"/><path d="M3.6 5.2 L8.3 0.5" stroke-width="1.2"/><path d="M5.2 0 H8.8 V3.6Z" fill="#f4f4f4" stroke="none"/></g>
<path d="M13.8 414.1 H11.5 V421.2 H13.8" fill="none" stroke="#f4f4f4" stroke-width="1.1"/><path d="M13.600 417.600 H18.600" stroke="#f4f4f4" stroke-width="1.1"/><path d="M16.9 414.900 L19.9 417.600 L16.9 420.300z" fill="#f4f4f4"/>
<circle cx="126.5" cy="16.3" r="9.4" fill="#f8dc14"/>
<g transform="translate(122 11.9) scale(0.9888888888888889)"><path d="M2.9 1.7 a3 1.5 0 0 1 6 0 v3.4 a3 1.5 0 0 1 -2 1.4 v-2 a3.4 1.6 0 0 0 -4 -1.7z" fill="#3b3a22"/><path d="M0.1 4.7 a3.4 1.55 0 0 1 6.8 0 v2.7 a3.4 1.55 0 0 1 -6.8 0z" fill="#3b3a22"/><path d="M0.1 5.55 a3.4 1.55 0 0 0 6.8 0 M0.1 7.0 a3.4 1.55 0 0 0 6.8 0" fill="none" stroke="#f8dc14" stroke-width="0.55"/><path d="M7.1 3.4 a3 1.5 0 0 0 1.8 -0.9" fill="none" stroke="#f8dc14" stroke-width="0.5"/></g>
<path d="M260.300 14.400 L263.800 17.700 L267.300 14.400" fill="none" stroke="#fff" stroke-width="1.150"/>
<path d="M526.12 14.14 L526.12 15.46 L525.51 15.52 L525.02 16.35 L525.29 16.91 L524.14 17.58 L523.78 17.07 L522.82 17.07 L522.46 17.58 L521.31 16.91 L521.58 16.35 L521.09 15.52 L520.48 15.46 L520.48 14.14 L521.09 14.08 L521.58 13.25 L521.31 12.69 L522.46 12.02 L522.82 12.53 L523.78 12.53 L524.14 12.02 L525.29 12.69 L525.02 13.25 L525.51 14.08Z M524.17 14.80 A0.87 0.87 0 1 0 522.43 14.80 A0.87 0.87 0 1 0 524.17 14.80Z" fill="#f8dc14" fill-rule="evenodd" stroke="#f8dc14" stroke-width="0.5" stroke-linejoin="round"/>
<path d="M531.33 17.46 L531.33 18.74 L530.73 18.79 L530.26 19.60 L530.52 20.14 L529.41 20.78 L529.07 20.29 L528.13 20.29 L527.79 20.78 L526.68 20.14 L526.94 19.60 L526.47 18.79 L525.87 18.74 L525.87 17.46 L526.47 17.41 L526.94 16.60 L526.68 16.06 L527.79 15.42 L528.13 15.91 L529.07 15.91 L529.41 15.42 L530.52 16.06 L530.26 16.60 L530.73 17.41Z M529.44 18.10 A0.84 0.84 0 1 0 527.76 18.10 A0.84 0.84 0 1 0 529.44 18.10Z" fill="#f8dc14" fill-rule="evenodd" stroke="#f8dc14" stroke-width="0.5" stroke-linejoin="round"/>
<circle cx="640.3" cy="16" r="8.9" fill="#f8dc14"/>
<path d="M637 11.900 l0.900 -0.500 l0.900 0.500 l0.900 -0.500 l0.900 0.500 l0.900 -0.500 l0.900 0.500 l0.900 -0.500 l0.700 0.500 V19.400 l-0.700 0.400 l-0.900 -0.500 l-0.900 0.500 l-0.900 -0.500 l-0.900 0.500 l-0.900 -0.500 l-0.900 0.500 l-0.900 -0.500z" fill="#3b3a22"/><path d="M638.300 13.800 H642.700 M638.300 15.400 H642.700" stroke="#8a7f25" stroke-width="0.7"/><path d="M638.600 17.500 H642.400" stroke="#f3e9a0" stroke-width="0.8"/>
<path d="M752.300 13.200 L757.500 18.400 M757.500 13.200 L752.300 18.400" stroke="#f8dc14" stroke-width="1.300"/>
<path d="M128.400 49 H136.800 V56.300 a0.600 0.600 0 0 1 -0.600 0.600 H129 a0.600 0.600 0 0 1 -0.600 -0.600z" fill="#5b9fd6"/><path d="M130.300 47.900 V49.500 M134.900 47.900 V49.500" stroke="#5b9fd6" stroke-width="1.200"/><path d="M128.400 50.500 H136.800" stroke="#fff" stroke-width="0.600"/>
<path d="M179.300 51 L183 54.700 L186.700 51" fill="none" stroke="#5b9fd6" stroke-width="1.100"/>
<path d="M550 47.800 H554 V50.400 H557 V56.700 a0.400 0.400 0 0 1 -0.400 0.400 H550 a0.400 0.400 0 0 1 -0.400 -0.400 V48.200 a0.400 0.400 0 0 1 0.400 -0.400z M554.700 47.800 L557 50 H554.700z" fill="#5b9fd6"/><path d="M550.800 53.200 H555.800 M550.800 54.800 H555.800" stroke="#dcebf7" stroke-width="0.700"/>
<circle cx="346.900" cy="143.4" r="2.900" fill="none" stroke="#777" stroke-width="1"/><path d="M349 145.5 L351.700 148.20000000000002" stroke="#777" stroke-width="1.200" stroke-linecap="round"/>
<circle cx="346.900" cy="378.40000000000003" r="2.900" fill="none" stroke="#777" stroke-width="1"/><path d="M349 380.5 L351.700 383.2" stroke="#777" stroke-width="1.200" stroke-linecap="round"/>
<g transform="translate(117.4 208.0) scale(0.9785714285714285)"><rect x="0" y="0" width="14" height="14" rx="2.6" fill="#f8dc14"/><path d="M3.9 14 V3 H8.3 a2 2 0 0 1 2 2 V8.9 a2 2 0 0 1 -2 2 H4.2" fill="none" stroke="#fffce6" stroke-width="1.9"/></g>
<g transform="translate(117.4 239.7) scale(0.9785714285714285)"><rect x="0" y="0" width="14" height="14" rx="2.6" fill="#f8dc14"/><path d="M3.9 14 V3 H8.3 a2 2 0 0 1 2 2 V8.9 a2 2 0 0 1 -2 2 H4.2" fill="none" stroke="#fffce6" stroke-width="1.9"/></g>
<g transform="translate(117.4 271.40000000000003) scale(0.9785714285714285)"><rect x="0" y="0" width="14" height="14" rx="2.6" fill="#f8dc14"/><path d="M3.9 14 V3 H8.3 a2 2 0 0 1 2 2 V8.9 a2 2 0 0 1 -2 2 H4.2" fill="none" stroke="#fffce6" stroke-width="1.9"/></g>
<g transform="translate(118.9 304.6) scale(1.0)" fill="none" stroke="#a2a2a2" stroke-width="0.85"><rect x="0.45" y="5.9" width="9.9" height="3.7"/><path d="M0.5 7.75 H10.3"/><rect x="2.5" y="2.1" width="2.1" height="3.8"/><rect x="5.8" y="0.5" width="2.1" height="5.4"/></g>
<path d="M632.800 41.600 H638.200 L635.500 44.900z" fill="#f8dc14"/>
<g transform="translate(732.8 39.5) scale(0.69)" fill="none" stroke="#b3becb" stroke-width="0.85"><rect x="0.45" y="5.9" width="9.9" height="3.7"/><path d="M0.5 7.75 H10.3"/><rect x="2.5" y="2.1" width="2.1" height="3.8"/><rect x="5.8" y="0.5" width="2.1" height="5.4"/></g>
<g transform="translate(747.8 38.2) scale(1.0444444444444445)"><path d="M2.9 1.7 a3 1.5 0 0 1 6 0 v3.4 a3 1.5 0 0 1 -2 1.4 v-2 a3.4 1.6 0 0 0 -4 -1.7z" fill="#f4f6f8"/><path d="M0.1 4.7 a3.4 1.55 0 0 1 6.8 0 v2.7 a3.4 1.55 0 0 1 -6.8 0z" fill="#f4f6f8"/><path d="M0.1 5.55 a3.4 1.55 0 0 0 6.8 0 M0.1 7.0 a3.4 1.55 0 0 0 6.8 0" fill="none" stroke="#425b77" stroke-width="0.55"/><path d="M7.1 3.4 a3 1.5 0 0 0 1.8 -0.9" fill="none" stroke="#425b77" stroke-width="0.5"/></g>
<g transform="translate(751 133.4)"><path d="M0.4 0 H4.2 V2.8 H7 V8.6 a0.4 0.4 0 0 1 -0.4 0.4 H0.4 a0.4 0.4 0 0 1 -0.4 -0.4 V0.4 a0.4 0.4 0 0 1 0.4 -0.4z M4.9 0 L7 2.1 H4.9z" fill="#6e6e6e"/><path d="M1.2 1.4 H3 M1.2 2.6 H3" stroke="#fff" stroke-width="0.5"/><path d="M4.6 4.2 H3.3 a0.7 0.7 0 0 0 0 1.4 H3.9 a0.7 0.7 0 0 1 0 1.4 H2.6 M3.6 3.6 V7.6" stroke="#fff" stroke-width="0.6" fill="none"/></g>
<g transform="translate(751 196.7)"><path d="M0.4 0 H4.2 V2.8 H7 V8.6 a0.4 0.4 0 0 1 -0.4 0.4 H0.4 a0.4 0.4 0 0 1 -0.4 -0.4 V0.4 a0.4 0.4 0 0 1 0.4 -0.4z M4.9 0 L7 2.1 H4.9z" fill="#6e6e6e"/><path d="M1.2 1.4 H3 M1.2 2.6 H3" stroke="#fff" stroke-width="0.5"/><path d="M4.6 4.2 H3.3 a0.7 0.7 0 0 0 0 1.4 H3.9 a0.7 0.7 0 0 1 0 1.4 H2.6 M3.6 3.6 V7.6" stroke="#fff" stroke-width="0.6" fill="none"/></g>
<g transform="translate(751 260)"><path d="M0.4 0 H4.2 V2.8 H7 V8.6 a0.4 0.4 0 0 1 -0.4 0.4 H0.4 a0.4 0.4 0 0 1 -0.4 -0.4 V0.4 a0.4 0.4 0 0 1 0.4 -0.4z M4.9 0 L7 2.1 H4.9z" fill="#6e6e6e"/><path d="M1.8 5.6 H5.2" stroke="#fff" stroke-width="1.1"/></g>
</svg>
</body></html>
